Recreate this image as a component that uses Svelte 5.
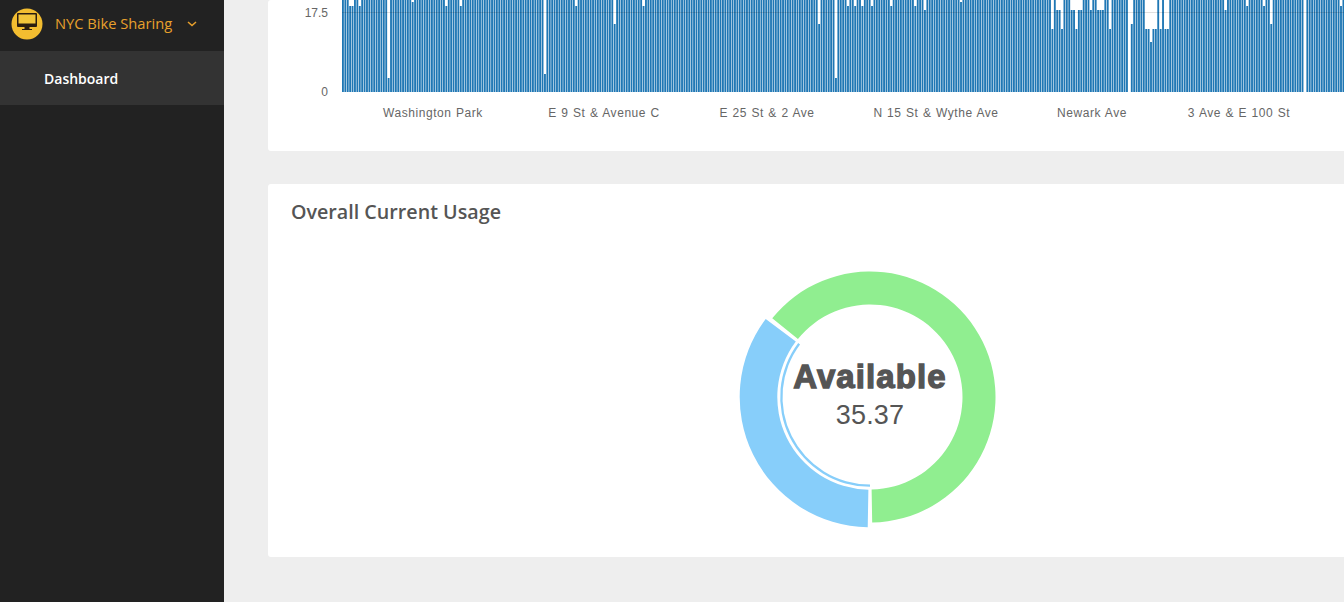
<script>
  const pitch = 2.405;
  const barStart = 342;
  const baseline = 92;

  // [from, to, top of bar] in page x; every other bar runs off the top of the view
  const shortBars = [
    [350, 353, 6], [359, 360.5, 6], [388.5, 390, 78], [412.5, 414, 2], [446, 447.5, 6], [449.5, 451, 6],
    [460.5, 462, 6], [526.5, 528, 6], [544.5, 546, 74], [569.5, 571, 60], [576, 577.5, 6], [613.5, 615, 24],
    [617.5, 619, 78], [624.5, 626, 6], [642.5, 644, 6], [818.5, 820, 24], [824.5, 826, 38], [834.5, 836, 78],
    [846, 849, 6], [851, 852.5, 6], [854, 856, 6], [856, 857, 10], [862, 863.5, 6], [867.5, 869, 10],
    [870, 873, 6], [877, 878.5, 2], [882, 883.5, 6], [890, 891.5, 6], [914.5, 915.5, 6], [915.5, 917.5, 92],
    [924.5, 926, 10], [937, 938.5, 24], [960, 961.5, 2], [1051, 1052.5, 29], [1057, 1060, 10], [1060, 1062.5, 29],
    [1062.5, 1064, 10], [1064.5, 1066, 10], [1070.5, 1075, 10], [1075, 1077, 29], [1077, 1082, 10], [1089.5, 1091, 10],
    [1097.5, 1105, 10], [1109.5, 1111, 29], [1122.5, 1124, 6], [1129, 1131, 92], [1131, 1132, 24], [1144, 1150, 29],
    [1150, 1152, 42], [1152, 1153.5, 29], [1155, 1158, 29], [1160, 1163, 29], [1165, 1168, 29],
    [1187.5, 1189, 92], [1192.5, 1194, 92], [1225.5, 1227, 10], [1243, 1244.5, 6], [1246, 1248, 6],
    [1264, 1265.5, 6], [1270.5, 1272, 24], [1304.5, 1306, 92], [1340, 1342, 6]
  ];

  function barTop(x) {
    const hit = shortBars.find((b) => x + 0.95 >= b[0] && x + 0.95 < b[1]);
    return hit ? hit[2] : -8;
  }

  const bars = [];
  for (let x = barStart; x < 1344; x += pitch) {
    bars.push({ x: x - 268, top: barTop(x) });
  }

  const stations = [
    { name: 'Washington Park', x: 433 },
    { name: 'E 9 St & Avenue C', x: 604 },
    { name: 'E 25 St & 2 Ave', x: 767 },
    { name: 'N 15 St & Wythe Ave', x: 936 },
    { name: 'Newark Ave', x: 1092 },
    { name: '3 Ave & E 100 St', x: 1239 }
  ];

  // donut helpers, angle in degrees clockwise from 12 o'clock
  function point(r, deg) {
    const a = (deg * Math.PI) / 180;
    return `${(150 + r * Math.sin(a)).toFixed(2)} ${(150 - r * Math.cos(a)).toFixed(2)}`;
  }

  function ring(inner, outer, from, to) {
    const large = to - from > 180 ? 1 : 0;
    return `M${point(outer, from)}A${outer} ${outer} 0 ${large} 1 ${point(outer, to)}L${point(inner, to)}A${inner} ${inner} 0 ${large} 0 ${point(inner, from)}Z`;
  }

  const split = 180 + 35.37 * 3.6;
</script>

<div class="app">
  <aside class="sidebar">
    <div class="brand">
      <span class="logo">
        <svg width="32" height="32" viewBox="0 0 32 32">
          <circle cx="16" cy="16" r="15.5" fill="#f3bd30" />
          <rect x="6" y="5" width="20" height="14" rx="1" fill="#2b1d10" />
          <rect x="7.5" y="6.5" width="17" height="9" fill="#f3c53a" />
          <rect x="13.5" y="19" width="5" height="2" fill="#2b1d10" />
          <rect x="11" y="21" width="10" height="1" fill="#2b1d10" />
        </svg>
      </span>
      <span class="brand-name">NYC Bike Sharing</span>
      <svg class="chevron" width="10" height="6" viewBox="0 0 10 6">
        <path d="M1 1l4 3.6L9 1" fill="none" stroke="#e8a02c" stroke-width="1.5" />
      </svg>
    </div>
    <nav class="nav-item">Dashboard</nav>
  </aside>

  <main class="content">
    <section class="card chart-card">
      <svg width="1204" height="151" viewBox="0 0 1204 151">
        {#each bars as bar}
          {#if bar.top < baseline}
            <rect x={bar.x} y={bar.top} width="1.85" height={baseline - bar.top} fill="#1f77b4" />
          {/if}
        {/each}
        <line x1="74" x2="1204" y1="12.5" y2="12.5" stroke="#000" stroke-opacity="0.12" />
        <text class="tick" x="60" y="17" text-anchor="end">17.5</text>
        <text class="tick" x="60" y="95.5" text-anchor="end">0</text>
        {#each stations as s}
          <text class="tick station" x={s.x - 268} y="117" text-anchor="middle">{s.name}</text>
        {/each}
      </svg>
    </section>

    <section class="card usage-card">
      <h2>Overall Current Usage</h2>
      <div class="donut">
        <svg width="300" height="300" viewBox="0 0 300 300">
          <path d={ring(92.5, 125.5, split + 1.5, 539)} fill="#90ee90" />
          <path d={ring(92.7, 130.3, 181, split - 0.5)} fill="#87cefa" />
          <path d={ring(87.5, 89.8, 180, split - 0.4)} fill="#87cefa" />
        </svg>
        <div class="donut-label">
          <strong>Available</strong>
          <span>35.37</span>
        </div>
      </div>
    </section>
  </main>
</div>

<style>
  :global(body) {
    background: #eee;
  }

  .app {
    display: flex;
    height: 602px;
    overflow: hidden;
    font-family: "Open Sans", sans-serif;
  }

  .sidebar {
    width: 224px;
    flex-shrink: 0;
    background: #222;
  }

  .brand {
    display: flex;
    align-items: center;
    height: 47px;
    padding: 0 0 4px 11px;
  }

  .logo {
    display: flex;
    width: 32px;
    height: 32px;
  }

  .brand-name {
    margin: 0 0 2px 12px;
    font-size: 14.7px;
    color: #e8a02c;
  }

  .chevron {
    margin-left: 15px;
  }

  .nav-item {
    height: 54px;
    padding-left: 44px;
    line-height: 56px;
    font-size: 14px;
    font-weight: 600;
    color: #fff;
    background: #333;
  }

  .content {
    flex: 1;
    min-width: 0;
    padding-left: 44px;
    background: #eee;
  }

  .card {
    width: 1204px;
    background: #fff;
    border-radius: 3px;
  }

  .chart-card {
    height: 151px;
  }

  .chart-card svg {
    display: block;
  }

  .tick {
    font-family: "Liberation Sans", Arial, sans-serif;
    font-size: 12px;
    fill: #666;
  }

  .station {
    letter-spacing: 0.55px;
    word-spacing: 0.6px;
  }

  .usage-card {
    height: 373px;
    margin-top: 33px;
    padding-top: 16px;
    box-sizing: border-box;
  }

  h2 {
    margin: 0 0 0 23px;
    font-size: 19.7px;
    line-height: 24px;
    font-weight: 600;
    color: #555;
  }

  .donut {
    position: relative;
    width: 300px;
    height: 300px;
    margin: 23px auto 0;
  }

  .donut svg {
    display: block;
  }

  .donut-label {
    position: absolute;
    left: 0;
    right: 0;
    top: 111px;
    display: flex;
    flex-direction: column;
    align-items: center;
    font-family: "Liberation Sans", Arial, sans-serif;
    color: #555;
  }

  .donut-label strong {
    font-size: 33px;
    line-height: 38px;
    letter-spacing: 1.1px;
    -webkit-text-stroke: 1.3px #555;
  }

  .donut-label span {
    font-size: 27px;
    line-height: 38px;
    letter-spacing: 0.2px;
  }
</style>
